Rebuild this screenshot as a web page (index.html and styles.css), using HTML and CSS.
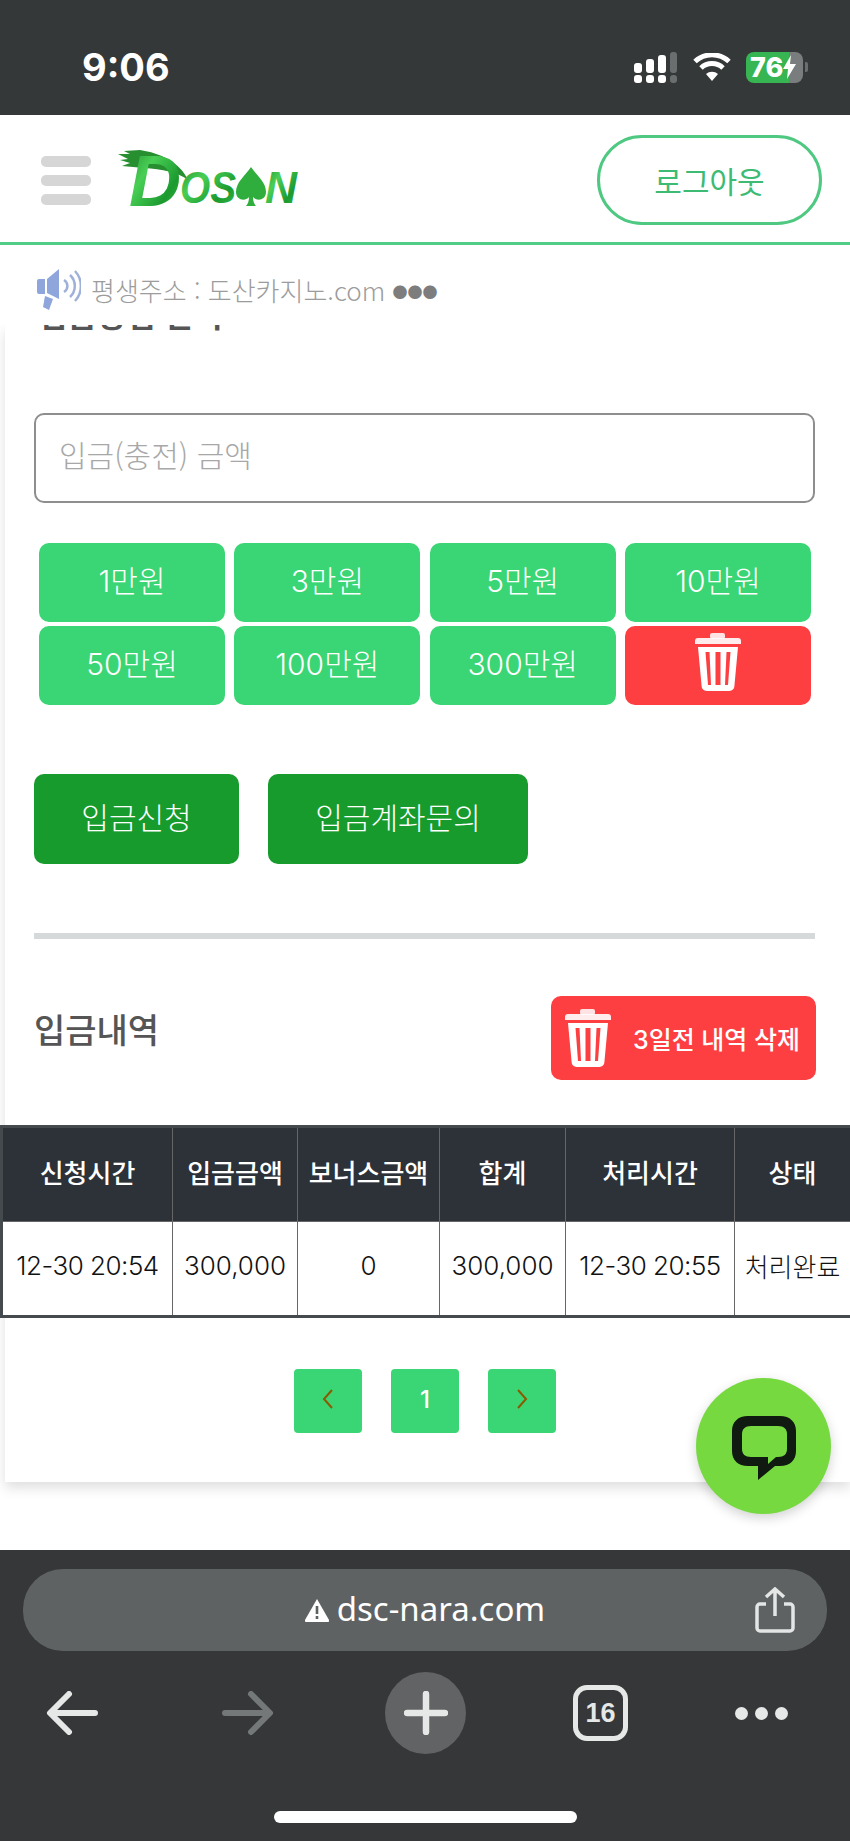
FILE: index.html
```html
<!DOCTYPE html>
<html lang="ko">
<head>
    <meta charset="UTF-8">
    <meta name="viewport" content="width=device-width, initial-scale=1.0">
    <title>입금신청</title>
    <link rel="stylesheet" href="styles.css">
</head>
<body>
    <svg class="sprite" aria-hidden="true">
        <symbol id="trash" viewBox="0 0 46 58">
            <rect x="15" y="0" width="15" height="6" rx="2" fill="#fff" opacity="0.85"/>
            <path d="M3 5h40a3 3 0 0 1 3 3v3H0V8a3 3 0 0 1 3-3z" fill="#fff" opacity="0.9"/>
            <path d="M3 14h40l-3.600 39a5 5 0 0 1-5 5H11.600a5 5 0 0 1-5-5z" fill="#fff"/>
            <path d="M10.500 19l2.500 33h3L14.500 19zM20.500 19v33h5V19zM31.500 19L30 52h3l2.500-33z" fill="#fe3f42"/>
        </symbol>
    </svg>

    <div class="status-bar">
        <span class="clock">9:06</span>
        <div class="status-icons">
            <svg class="signal" width="44" height="31" viewBox="0 0 44 31">
                <g fill="#fff">
                    <rect x="0" y="11" width="8" height="10" rx="3"/>
                    <rect x="12" y="7" width="8" height="14" rx="3"/>
                    <rect x="24" y="3" width="8" height="18" rx="3"/>
                    <rect x="0" y="23" width="8" height="8" rx="3"/>
                    <rect x="12" y="23" width="8" height="8" rx="3"/>
                    <rect x="24" y="23" width="8" height="8" rx="3"/>
                </g>
                <g fill="#6b6e6e">
                    <rect x="36" y="0" width="7" height="21" rx="3"/>
                    <rect x="36" y="23" width="7" height="8" rx="3"/>
                </g>
            </svg>
            <svg class="wifi" width="38" height="28" viewBox="0 0 38 28">
                <path d="M19 28l-6-7a9 9 0 0 1 12 0z" fill="#fff"/>
                <path d="M8 15a16 16 0 0 1 22 0" fill="none" stroke="#fff" stroke-width="5"/>
                <path d="M2 8.500a25 25 0 0 1 34 0" fill="none" stroke="#fff" stroke-width="5"/>
            </svg>
            <div class="battery">
                <div class="battery-body">
                    <span class="battery-num">76</span>
                    <svg width="13" height="24" viewBox="0 0 13 24"><path d="M8 0L0 14h5l-1 10 9-15H7z" fill="#fff"/></svg>
                </div>
                <span class="battery-nub"></span>
            </div>
        </div>
    </div>

    <header class="top-header">
        <div class="menu-btn"><span></span><span></span><span></span></div>
        <svg class="logo" width="180" height="84" viewBox="0 -12 180 84">
            <defs>
                <linearGradient id="logoGreen" x1="0" y1="0" x2="1" y2="1">
                    <stop offset="0" stop-color="#1f8a2c"/>
                    <stop offset="0.35" stop-color="#49cf55"/>
                    <stop offset="0.7" stop-color="#1c9a2f"/>
                    <stop offset="1" stop-color="#3cc04a"/>
                </linearGradient>
            </defs>
            <path d="M0 4l12 0-6-3 16-1c20 3 40 12 48 30-10-8-26-11-44-12L4 16l8-3-10-3 8-1z" fill="#278f30"/>
            <text class="logo-big" x="11" y="56" fill="url(#logoGreen)">D</text>
            <text class="logo-small" x="62" y="53" textLength="56" lengthAdjust="spacingAndGlyphs" fill="url(#logoGreen)">OS</text>
            <path d="M133 17c6 9 15 15 15 25 0 8-9 10-13 5 0 4 1 7 3 9h-10c2-2 3-5 3-9-4 5-13 3-13-5 0-10 9-16 15-25z" fill="#2fae3d"/>
            <text class="logo-small" x="147" y="53" textLength="32" lengthAdjust="spacingAndGlyphs" fill="url(#logoGreen)">N</text>
        </svg>
        <a class="logout-btn">로그아웃</a>
    </header>

    <div class="notice">
        <svg width="44" height="42" viewBox="0 0 44 42">
            <path d="M2 10h6v15H2a2 2 0 0 1-2-2V12a2 2 0 0 1 2-2zM10 10l12-10v30l-12-6z" fill="#8ea6dc"/>
            <path d="M8 27l8 3-4 11-6-3z" fill="#8ea6dc"/>
            <path d="M27 11a7 7 0 0 1 0 12M33 6a15 15 0 0 1 0 22M38 2a22 22 0 0 1 0 30" fill="none" stroke="#9fb1d8" stroke-width="2.500"/>
        </svg>
        <span>평생주소 : 도산카지노.com <span class="notice-dots">●●●</span></span>
    </div>

    <main class="content">
        <div class="card">
            <h2 class="clipped-title">입금방법 선택</h2>

            <input class="amount-input" type="text" placeholder="입금(충전) 금액">

            <div class="quick-grid">
                <button class="quick-btn">1만원</button>
                <button class="quick-btn">3만원</button>
                <button class="quick-btn">5만원</button>
                <button class="quick-btn">10만원</button>
                <button class="quick-btn">50만원</button>
                <button class="quick-btn">100만원</button>
                <button class="quick-btn">300만원</button>
                <button class="quick-btn quick-clear"><svg width="46" height="58"><use href="#trash"/></svg></button>
            </div>

            <div class="action-row">
                <button class="action-btn action-apply">입금신청</button>
                <button class="action-btn action-ask">입금계좌문의</button>
            </div>

            <hr class="divider">

            <div class="history-head">
                <h3>입금내역</h3>
                <button class="delete-old"><svg width="46" height="58"><use href="#trash"/></svg>3일전 내역 삭제</button>
            </div>

            <table class="history-table">
                <thead>
                    <tr>
                        <th class="col-a">신청시간</th>
                        <th class="col-b">입금금액</th>
                        <th class="col-c">보너스금액</th>
                        <th class="col-d">합계</th>
                        <th class="col-e">처리시간</th>
                        <th class="col-f">상태</th>
                    </tr>
                </thead>
                <tbody>
                    <tr>
                        <td class="cell-time">12-30 20:54</td>
                        <td>300,000</td>
                        <td>0</td>
                        <td>300,000</td>
                        <td class="cell-time">12-30 20:55</td>
                        <td>처리완료</td>
                    </tr>
                </tbody>
            </table>

            <div class="pager">
                <a class="page-btn"><svg width="14" height="24" viewBox="0 0 14 24"><path d="M11 3L3 12l8 9" fill="none" stroke="#8a5a00" stroke-width="2"/></svg></a>
                <a class="page-btn">1</a>
                <a class="page-btn"><svg width="14" height="24" viewBox="0 0 14 24"><path d="M3 3l8 9-8 9" fill="none" stroke="#8a5a00" stroke-width="2"/></svg></a>
            </div>
        </div>

        <a class="chat-fab">
            <svg width="64" height="64" viewBox="0 0 64 64">
                <path d="M16 0h32c10 0 16 6 16 15v20c0 9-6 15-16 15H43L26 64V50H16C6 50 0 44 0 35V15C0 6 6 0 16 0zm3 10c-6 0-9 3-9 8v15c0 5 3 8 9 8h17v7l8-7h2c6 0 9-3 9-8V18c0-5-3-8-9-8z" fill="#111a10" fill-rule="evenodd"/>
            </svg>
        </a>
    </main>

    <footer class="browser-bar">
        <div class="url-bar">
            <svg class="url-warn" width="24" height="23" viewBox="0 0 24 23">
                <path d="M12 0l12 21a1.500 1.500 0 0 1-1 2H1a1.500 1.500 0 0 1-1-2z" fill="#fff"/>
                <rect x="10.700" y="7" width="2.600" height="8" fill="#5e6162"/>
                <rect x="10.700" y="17" width="2.600" height="3" fill="#5e6162"/>
            </svg>
            <span class="url-text">dsc-nara.com</span>
            <svg class="url-share" width="40" height="46" viewBox="0 0 40 46">
                <path d="M11 17H5a3 3 0 0 0-3 3v21a3 3 0 0 0 3 3h30a3 3 0 0 0 3-3V20a3 3 0 0 0-3-3h-6" fill="none" stroke="#e4e6e6" stroke-width="3.500"/>
                <path d="M20 29V3M11 10l9-8 9 8" fill="none" stroke="#e4e6e6" stroke-width="3.500"/>
            </svg>
        </div>
        <div class="tool-row">
            <svg width="52" height="44" viewBox="0 0 52 44"><path d="M23 3L4 22l19 19M5 22h44" fill="none" stroke="#e6e8e8" stroke-width="6" stroke-linecap="round" stroke-linejoin="round"/></svg>
            <svg class="tool-forward" width="52" height="44" viewBox="0 0 52 44"><path d="M29 3l19 19-19 19M47 22H3" fill="none" stroke="#747879" stroke-width="6" stroke-linecap="round" stroke-linejoin="round"/></svg>
            <div class="new-tab">
                <svg width="44" height="44" viewBox="0 0 44 44"><path d="M22 3v38M3 22h38" fill="none" stroke="#e6e8e8" stroke-width="6.500" stroke-linecap="round"/></svg>
            </div>
            <div class="tab-count">16</div>
            <div class="more-dots"><span></span><span></span><span></span></div>
        </div>
        <div class="home-bar"></div>
    </footer>
</body>
</html>
```

FILE: styles.css
```css
* {
    box-sizing: border-box;
}
body {
    width: 850px;
    height: 1841px;
    margin: 0;
    overflow: hidden;
    display: flex;
    flex-direction: column;
    background-color: #fff;
    font-family: Inter, "Noto Sans CJK KR", "Noto Sans", sans-serif;
    font-weight: 300;
}
button {
    font-family: inherit;
    font-weight: inherit;
    border: none;
    cursor: pointer;
}
.sprite {
    display: none;
}

/* status bar */
.status-bar {
    height: 115px;
    flex: none;
    display: flex;
    align-items: center;
    justify-content: space-between;
    padding: 19px 42px 0 82px;
    background-color: #353838;
    color: #fff;
}
.clock {
    font-family: Inter, sans-serif;
    font-weight: 700;
    font-size: 38px;
}
.status-icons {
    display: flex;
    align-items: center;
    gap: 15px;
}
.battery {
    display: flex;
    align-items: center;
    gap: 2px;
}
.battery-body {
    width: 57px;
    height: 31px;
    border-radius: 8px;
    display: flex;
    align-items: center;
    padding-left: 4px;
    background: linear-gradient(to right, #36b552 75%, #7a7d7d 75%);
    overflow: hidden;
}
.battery-num {
    font-family: Inter, sans-serif;
    font-weight: 800;
    font-size: 27px;
    line-height: 31px;
    color: #fff;
}
.battery-nub {
    width: 3px;
    height: 10px;
    border-radius: 0 2px 2px 0;
    background-color: #6b6e6e;
}

/* header */
.top-header {
    height: 130px;
    flex: none;
    display: flex;
    align-items: center;
    padding: 3px 28px 0 41px;
    background-color: #fff;
    border-bottom: 3px solid #52cd87;
}
.menu-btn {
    width: 50px;
    display: flex;
    flex-direction: column;
    gap: 8px;
}
.menu-btn span {
    height: 11px;
    border-radius: 5px;
    background-color: #d6d6d6;
}
.logo {
    margin-left: 27px;
}
.logo-big {
    font-family: "Liberation Sans", sans-serif;
    font-style: italic;
    font-weight: 700;
    font-size: 72px;
}
.logo-small {
    font-family: "Liberation Sans", sans-serif;
    font-style: italic;
    font-weight: 700;
    font-size: 44px;
}
.logout-btn {
    margin-left: auto;
    width: 225px;
    height: 90px;
    border: 3px solid #4fc882;
    border-radius: 45px;
    display: flex;
    align-items: center;
    justify-content: center;
    color: #3dbb74;
    font-family: "Noto Sans CJK KR", sans-serif;
    font-size: 30px;
    font-weight: 400;
}

/* notice */
.notice {
    height: 80px;
    flex: none;
    display: flex;
    align-items: center;
    gap: 10px;
    padding: 9px 0 0 37px;
    color: #9c9c9c;
    font-family: "Noto Sans CJK KR", sans-serif;
    font-size: 26px;
    background-color: #fff;
}
.notice-dots {
    color: #7d7d7d;
    font-size: 15px;
    vertical-align: 3px;
}

/* main card */
.content {
    position: relative;
    height: 1225px;
    flex: none;
    overflow: hidden;
    background-color: #fff;
}
.card {
    display: flow-root;
    height: 1157px;
    margin-left: 5px;
    padding: 0 0 0 29px;
    background-color: #fff;
    box-shadow: 0 6px 12px rgba(0, 0, 0, 0.13);
}
.clipped-title {
    margin: -29px 0 0 4px;
    height: 39px;
    font-size: 32px;
    line-height: 39px;
    font-weight: 700;
    color: #555;
}
.amount-input {
    display: block;
    width: 781px;
    height: 90px;
    margin-top: 78px;
    padding: 0 23px 8px;
    border: 2px solid #8e8e8e;
    border-radius: 10px;
    font-family: "Noto Sans CJK KR", sans-serif;
    font-weight: 300;
    font-size: 30px;
    background-color: #fff;
}
.amount-input::placeholder {
    color: #a8a8a8;
}
.quick-grid {
    display: grid;
    grid-template-columns: repeat(4, 186px);
    grid-auto-rows: 79px;
    column-gap: 9.330px;
    row-gap: 4px;
    margin: 40px 0 0 5px;
}
.quick-btn {
    padding: 0 0 8px;
    border-radius: 10px;
    background-color: #3ad574;
    color: #fff;
    font-size: 30px;
}
.quick-clear {
    padding: 0 0 1px;
    background-color: #fe3f42;
}
.action-row {
    display: flex;
    gap: 29px;
    margin-top: 69px;
}
.action-btn {
    height: 90px;
    padding: 0 0 6px;
    border-radius: 10px;
    background-color: #179b2d;
    color: #fff;
    font-size: 30px;
}
.action-apply {
    width: 205px;
}
.action-ask {
    width: 260px;
}
.divider {
    width: 781px;
    height: 6px;
    margin: 69px 0 0 0;
    border: none;
    background-color: #d5d9d9;
}
.history-head {
    display: flex;
    align-items: flex-start;
    justify-content: space-between;
    width: 782px;
    margin-top: 57px;
}
.history-head h3 {
    margin: 12px 0 0;
    font-size: 34px;
    line-height: 46px;
    font-weight: 500;
    color: #555;
}
.delete-old {
    width: 265px;
    height: 84px;
    display: flex;
    align-items: center;
    gap: 22px;
    padding: 0 0 0 14px;
    border-radius: 10px;
    background-color: #fe3f42;
    color: #fff;
    font-size: 25px;
    font-weight: 500;
    white-space: nowrap;
}
.history-table {
    width: 850px;
    height: 193px;
    margin: 45px 0 0 -34px;
    table-layout: fixed;
    border-collapse: collapse;
    border: 3px solid #454a4f;
    font-size: 26px;
}
.history-table th, .history-table td {
    padding: 0 0 6px;
    border: 1px solid #666;
    text-align: center;
    white-space: nowrap;
}
.history-table th {
    height: 95px;
    background-color: #2d3138;
    color: #fff;
    font-weight: 500;
}
.history-table td {
    background-color: #fff;
    color: #111;
}
.history-table .cell-time {
    letter-spacing: -0.5px;
}
.col-a { width: 171px; }
.col-b { width: 125px; }
.col-c { width: 142px; }
.col-d { width: 126px; }
.col-e { width: 169px; }
.col-f { width: 117px; }
.pager {
    display: flex;
    justify-content: center;
    gap: 29px;
    margin: 51px 0 0 -34px;
    width: 850px;
}
.page-btn {
    width: 68px;
    height: 64px;
    display: flex;
    align-items: center;
    justify-content: center;
    padding-bottom: 4px;
    border-radius: 4px;
    background-color: #3ad574;
    color: #fff;
    font-weight: 500;
    font-size: 24px;
}
.chat-fab {
    position: absolute;
    left: 696px;
    top: 1053px;
    width: 135px;
    height: 136px;
    display: flex;
    align-items: center;
    justify-content: center;
    padding-top: 4px;
    border-radius: 50%;
    background-color: #76d940;
    box-shadow: 0 4px 12px rgba(0, 0, 0, 0.18);
}

/* browser chrome */
.browser-bar {
    flex: 1;
    display: flex;
    flex-direction: column;
    padding: 19px 23px 0;
    background-color: #353738;
}
.url-bar {
    position: relative;
    height: 82px;
    flex: none;
    display: flex;
    align-items: center;
    justify-content: center;
    gap: 8px;
    border-radius: 40px;
    background-color: #5f6263;
    color: #fff;
    font-family: "Noto Sans", sans-serif;
    font-weight: 400;
    font-size: 33px;
}
.url-text {
    padding-bottom: 4px;
}
.url-share {
    position: absolute;
    right: 32px;
    top: 18px;
}
.tool-row {
    display: flex;
    align-items: center;
    height: 82px;
    margin-top: 21px;
    padding-left: 23px;
}
.tool-forward {
    margin-left: 124px;
}
.new-tab {
    width: 81px;
    height: 82px;
    margin-left: 111px;
    display: flex;
    align-items: center;
    justify-content: center;
    border-radius: 50%;
    background-color: #626365;
}
.tab-count {
    width: 55px;
    height: 56px;
    margin-left: 107px;
    display: flex;
    align-items: center;
    justify-content: center;
    border: 5px solid #e6e8e8;
    border-radius: 14px;
    color: #e6e8e8;
    font-family: "Liberation Sans", sans-serif;
    font-weight: 700;
    font-size: 27px;
}
.more-dots {
    display: flex;
    gap: 7px;
    margin-left: 107px;
}
.more-dots span {
    width: 13px;
    height: 13px;
    border-radius: 50%;
    background-color: #e6e8e8;
}
.home-bar {
    width: 303px;
    height: 12px;
    margin: 57px 0 0 251px;
    border-radius: 6px;
    background-color: #fff;
}
```
